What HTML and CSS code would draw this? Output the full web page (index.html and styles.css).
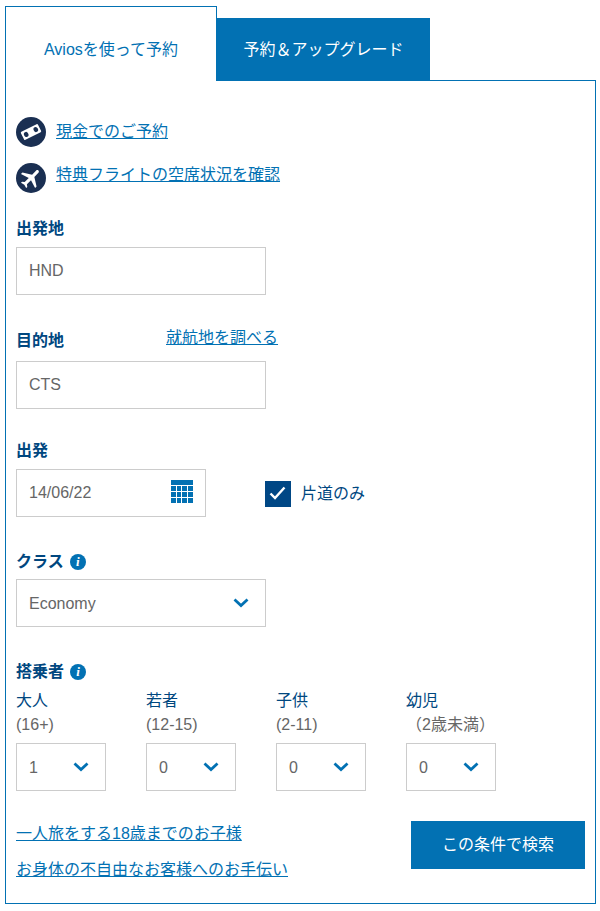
FILE: index.html
```html
<!DOCTYPE html>
<html lang="ja">
<head>
<meta charset="utf-8">
<title>予約</title>
<link rel="stylesheet" href="styles.css">
</head>
<body>
<div class="widget">
  <div class="tabs">
    <div class="tab tab-active">Aviosを使って予約</div>
    <div class="tab tab-other">予約＆アップグレード</div>
  </div>
  <div class="panel">
    <div class="promo first">
      <svg class="round" viewBox="0 0 30 30"><circle cx="15" cy="15" r="15" fill="#1a2f52"/><g transform="rotate(-27 15 15)"><rect x="5.5" y="10.5" width="19" height="9" rx="1" fill="#fff"/><ellipse cx="9.6" cy="15" rx="2.2" ry="2.6" fill="#1a2f52"/><ellipse cx="20.4" cy="15" rx="2.2" ry="2.6" fill="#1a2f52"/></g></svg>
      <a class="link" href="#">現金でのご予約</a>
    </div>
    <div class="promo second">
      <svg class="round" viewBox="0 0 30 30"><circle cx="15" cy="15" r="15" fill="#1a2f52"/><g transform="translate(15 15) rotate(45) scale(1.05) translate(-11.5 -12)"><path fill="#fff" d="M21 16v-2l-8-5V3.5c0-.83-.67-1.5-1.5-1.5S10 2.67 10 3.5V9l-8 5v2l8-2.5V19l-2 1.5V22l3.5-1 3.5 1v-1.5L13 19v-5.5l8 2.5z"/></g></svg>
      <a class="link" href="#">特典フライトの空席状況を確認</a>
    </div>

    <div class="label from-label">出発地</div>
    <div class="box wide gap-7">HND</div>

    <div class="label-row">
      <div class="label">目的地</div>
      <a class="link route-link" href="#">就航地を調べる</a>
    </div>
    <div class="box wide">CTS</div>

    <div class="label depart-label">出発</div>
    <div class="date-row">
      <div class="box date">
        <span>14/06/22</span>
        <svg class="cal" viewBox="0 0 22 24"><rect width="22" height="5" fill="#0271b3"/><g fill="#0271b3"><rect y="6" width="5" height="5"/><rect x="6" y="6" width="4" height="5"/><rect x="11" y="6" width="5" height="5"/><rect x="17" y="6" width="5" height="5"/><rect y="12" width="5" height="5"/><rect x="6" y="12" width="4" height="5"/><rect x="11" y="12" width="5" height="5"/><rect x="17" y="12" width="5" height="5"/><rect y="18" width="5" height="5"/><rect x="6" y="18" width="4" height="5"/><rect x="11" y="18" width="5" height="5"/><rect x="17" y="18" width="5" height="5"/></g></svg>
      </div>
      <span class="check"><svg viewBox="0 0 26 26"><path d="M5.5 12.5l4.5 4.5 9.5-10.5" fill="none" stroke="#fff" stroke-width="2.4"/></svg></span>
      <span class="check-label">片道のみ</span>
    </div>

    <div class="label info-label class-label">クラス<span class="info">i</span></div>
    <div class="box wide select select-gap">
      <span>Economy</span>
      <svg class="chev" viewBox="0 0 16 10"><path d="M1.5 1.5L8 7.5l6.5-6" fill="none" stroke="#0271b3" stroke-width="2.8"/></svg>
    </div>

    <div class="label info-label pax-label">搭乗者<span class="info">i</span></div>
    <div class="pax">
      <div class="pax-col">
        <div class="pax-name">大人</div>
        <div class="pax-age">(16+)</div>
        <div class="box pax-box select"><span>1</span><svg class="chev" viewBox="0 0 16 10"><path d="M1.5 1.5L8 7.5l6.5-6" fill="none" stroke="#0271b3" stroke-width="2.8"/></svg></div>
      </div>
      <div class="pax-col">
        <div class="pax-name">若者</div>
        <div class="pax-age">(12-15)</div>
        <div class="box pax-box select"><span>0</span><svg class="chev" viewBox="0 0 16 10"><path d="M1.5 1.5L8 7.5l6.5-6" fill="none" stroke="#0271b3" stroke-width="2.8"/></svg></div>
      </div>
      <div class="pax-col">
        <div class="pax-name">子供</div>
        <div class="pax-age">(2-11)</div>
        <div class="box pax-box select"><span>0</span><svg class="chev" viewBox="0 0 16 10"><path d="M1.5 1.5L8 7.5l6.5-6" fill="none" stroke="#0271b3" stroke-width="2.8"/></svg></div>
      </div>
      <div class="pax-col">
        <div class="pax-name">幼児</div>
        <div class="pax-age">（2歳未満）</div>
        <div class="box pax-box select"><span>0</span><svg class="chev" viewBox="0 0 16 10"><path d="M1.5 1.5L8 7.5l6.5-6" fill="none" stroke="#0271b3" stroke-width="2.8"/></svg></div>
      </div>
    </div>

    <div class="footer">
      <div class="foot-links">
        <a class="link" href="#">一人旅をする18歳までのお子様</a>
        <a class="link" href="#">お身体の不自由なお客様へのお手伝い</a>
      </div>
      <div class="search">この条件で検索</div>
    </div>
  </div>
</div>
</body>
</html>
```

FILE: styles.css
```css
* { box-sizing: border-box; }
html, body { margin: 0; padding: 0; background: #fff; }
body {
  font-family: "Liberation Sans", "Noto Sans CJK JP", sans-serif;
  font-size: 16px;
  line-height: 24px;
  color: #666;
  height: 911px;
  overflow: hidden;
}
.widget { width: 591px; margin: 6px 0 0 5px; }
.tabs { display: flex; align-items: flex-end; height: 74px; }
.tab {
  display: flex; align-items: center; justify-content: center;
  position: relative; margin-bottom: -1px;
}
.tab-active {
  width: 212px; height: 75px; padding-top: 12px;
  background: #fff; color: #0271b3;
  border: 1px solid #0271b3; border-bottom: 0;
}
.tab-other {
  width: 213px; height: 63px;
  background: #0271b3; color: #fff;
}
.panel {
  height: 824px;
  padding: 0 10px;
  border: 1px solid #0271b3;
}
.link { color: #0271b3; text-decoration: underline; }
.promo { display: flex; gap: 10px; }
.promo.first { margin-top: 36px; }
.promo.second { margin-top: 16px; }
.promo .link { margin-top: 3px; }
.promo.second .link { margin-top: 0; }
.round { width: 30px; height: 30px; display: block; flex: none; }
.label { height: 24px; padding-top: 1px; font-weight: 700; color: #00477f; }
.from-label { margin-top: 23px; }
.gap-7 { margin-top: 7px; }
.label-row { display: flex; align-items: flex-end; margin-top: 30px; margin-bottom: 9px; }
.route-link { height: 24px; padding-top: 1px; margin-left: 102px; margin-bottom: 3px; }
.box {
  height: 48px; border: 1px solid #ccc; background: #fff;
  padding: 0 12px; display: flex; align-items: center;
  justify-content: space-between; color: #666;
}
.wide { width: 250px; }
.depart-label { margin-top: 29px; margin-bottom: 7px; }
.date-row { display: flex; align-items: center; }
.date { width: 190px; }
.cal { width: 22px; height: 24px; display: block; margin-bottom: 2px; }
.check { width: 26px; height: 26px; margin: 2px 0 0 59px; background: #004785; display: block; }
.check svg { width: 26px; height: 26px; display: block; }
.check-label { margin-left: 10px; padding-top: 2px; color: #00477f; }
.info-label { display: flex; align-items: center; }
.info {
  width: 16px; height: 16px; border-radius: 50%; margin-left: 6px;
  background: #0271b3; color: #fff;
  font: italic 700 13px/16px "Liberation Serif", serif; text-align: center;
}
.class-label { margin-top: 32px; }
.select-gap { margin-top: 6px; }
.select span { padding-top: 2px; }
.chev { width: 16px; height: 10px; display: block; margin-right: 4px; }
.pax-label { margin-top: 32px; }
.pax { display: flex; gap: 40px; margin-top: 5px; }
.pax-col { width: 90px; }
.pax-name { height: 24px; padding-top: 1px; color: #00477f; }
.pax-age { height: 24px; padding-top: 1px; white-space: nowrap; }
.pax-box { margin-top: 7px; }
.footer { display: flex; justify-content: space-between; margin-top: 30px; }
.foot-links { display: flex; flex-direction: column; gap: 12px; padding-top: 1px; }
.search {
  width: 174px; height: 48px; background: #0271b3; color: #fff;
  display: flex; align-items: center; justify-content: center;
}
```
